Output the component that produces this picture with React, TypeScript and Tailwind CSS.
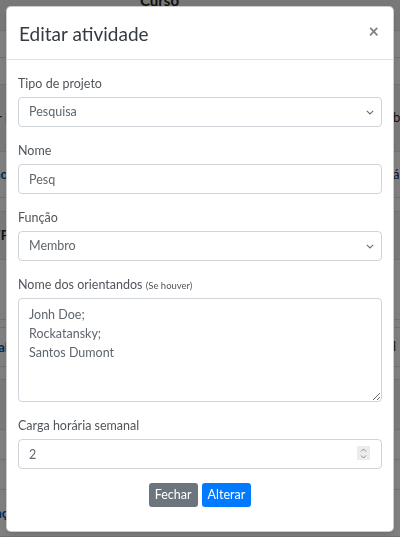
import React from "react";

const font = "font-['Lato','Segoe_UI','Noto_Sans',sans-serif]";

function Chevron() {
  return (
    <svg width="8" height="5" viewBox="0 0 8 5" className="pointer-events-none absolute right-[8px] top-[13px]">
      <path d="M0.8 0.8 L4 4 L7.2 0.8" fill="none" stroke="#6b6f73" strokeWidth="1.1" />
    </svg>
  );
}

function Label({ children }: { children: React.ReactNode }) {
  return <label className="mb-[3px] block h-[20px] text-[12.5px] leading-[20px] text-[#50565c]">{children}</label>;
}

function SelectBox({ value }: { value: string }) {
  return (
    <div className="relative">
      <select
        defaultValue={value}
        className="h-[30px] w-full appearance-none rounded-[4px] border border-[#ced4da] bg-white pl-[10px] text-[12.5px] text-[#5f666d] outline-none"
      >
        <option>{value}</option>
      </select>
      <Chevron />
    </div>
  );
}

function BgRow({ h, left, right, leftCls, rightCls, band }: { h: number; left?: string; right?: string; leftCls?: string; rightCls?: string; band?: boolean }) {
  return (
    <div className={`flex items-center justify-between border-b border-[#dee2e6] ${band ? "bg-[#f2f2f2]" : "bg-white"}`} style={{ height: h }}>
      <div className="flex w-[8px] justify-end overflow-hidden whitespace-nowrap">
        <span className={`text-[13px] leading-[17px] ${leftCls ?? "text-[#212529]"}`}>{left}</span>
      </div>
      <div className="flex w-[14px] justify-start overflow-hidden whitespace-nowrap">
        <span className={`pl-[7px] text-[13px] ${rightCls ?? "text-[#212529]"}`}>{right}</span>
      </div>
    </div>
  );
}

export default function App() {
  return (
    <div className={`relative h-[537px] w-[400px] overflow-hidden bg-white ${font}`}>
      {/* background page */}
      <div className="flex flex-col">
        <div className="flex h-[31px] items-start justify-start overflow-hidden border-b border-[#dee2e6] bg-[#f0f0f0] pl-[140px]">
          <span className="-mt-[11px] text-[15px] font-bold text-[#212529]">Curso</span>
        </div>
        <BgRow h={27} />
        <BgRow h={27} />
        <BgRow h={67} left="Superior i" right="b" band />
        <BgRow h={46} left="Ensino" right="á" leftCls="text-[#0056b3] font-bold" />
        <BgRow h={14} />
        <BgRow h={48} left="PFF" leftCls="text-[#212529] font-bold" band />
        <BgRow h={60} />
        <BgRow h={8} />
        <BgRow h={39} left="anal" right="l" leftCls="text-[#0056b3] font-bold" />
        <BgRow h={13} />
        <BgRow h={50} band />
        <BgRow h={30} />
        <BgRow h={30} />
        <BgRow h={47} left="Funç" leftCls="text-[#0056b3] font-bold" />
      </div>

      {/* backdrop */}
      <div className="fixed inset-0 bg-black/50" />

      {/* modal */}
      <div className="fixed inset-0 px-[6px] pt-[6px]">
        <div className="w-full overflow-hidden rounded-[5px] border border-black/20 bg-white shadow-md">
          <div className="flex h-[53px] items-center justify-between border-b border-[#dee2e6] pl-[12px] pr-[14px]">
            <h5 className="text-[19px] leading-none text-[#343a40]">Editar atividade</h5>
            <span className="-mt-[4px] text-[18px] font-bold leading-none text-[#808080]">×</span>
          </div>

          <div className="px-[11px] pt-[14px]">
            <div className="mb-[14px]">
              <Label>Tipo de projeto</Label>
              <SelectBox value="Pesquisa" />
            </div>
            <div className="mb-[14px]">
              <Label>Nome</Label>
              <input
                readOnly
                value="Pesq"
                className="h-[30px] w-full rounded-[4px] border border-[#ced4da] bg-white pl-[10px] text-[12.5px] text-[#5f666d] outline-none"
              />
            </div>
            <div className="mb-[14px]">
              <Label>Função</Label>
              <SelectBox value="Membro" />
            </div>
            <div className="mb-[14px]">
              <Label>
                Nome dos orientandos <small className="text-[9.5px]">(Se houver)</small>
              </Label>
              <textarea
                readOnly
                value={"Jonh Doe;\nRockatansky;\nSantos Dumont"}
                className="block h-[104px] w-full resize-y rounded-[4px] border border-[#ced4da] bg-white px-[10px] py-[6px] text-[12.5px] leading-[19px] text-[#5f666d] outline-none"
              />
            </div>
            <div>
              <Label>Carga horária semanal</Label>
              <div className="relative">
                <input
                  readOnly
                  value="2"
                  className="h-[30px] w-full rounded-[4px] border border-[#ced4da] bg-white pl-[10px] text-[12.5px] text-[#5f666d] outline-none"
                />
                <div className="absolute right-[12px] top-[7px] flex h-[14px] w-[13px] flex-col items-center justify-center bg-[#ececec]">
                  <svg width="7" height="11" viewBox="0 0 7 11">
                    <path d="M1 3.5 L3.5 1 L6 3.5 M1 7.5 L3.5 10 L6 7.5" fill="none" stroke="#8a8a8a" strokeWidth="1" />
                  </svg>
                </div>
              </div>
            </div>
          </div>

          <div className="flex justify-center gap-[4px] pb-[24px] pt-[14px]">
            <button className="h-[24px] rounded-[3px] bg-[#6c757d] px-[6px] text-[12.5px] text-white">Fechar</button>
            <button className="h-[24px] rounded-[3px] bg-[#007bff] px-[6px] text-[12.5px] text-white">Alterar</button>
          </div>
        </div>
      </div>
    </div>
  );
}
